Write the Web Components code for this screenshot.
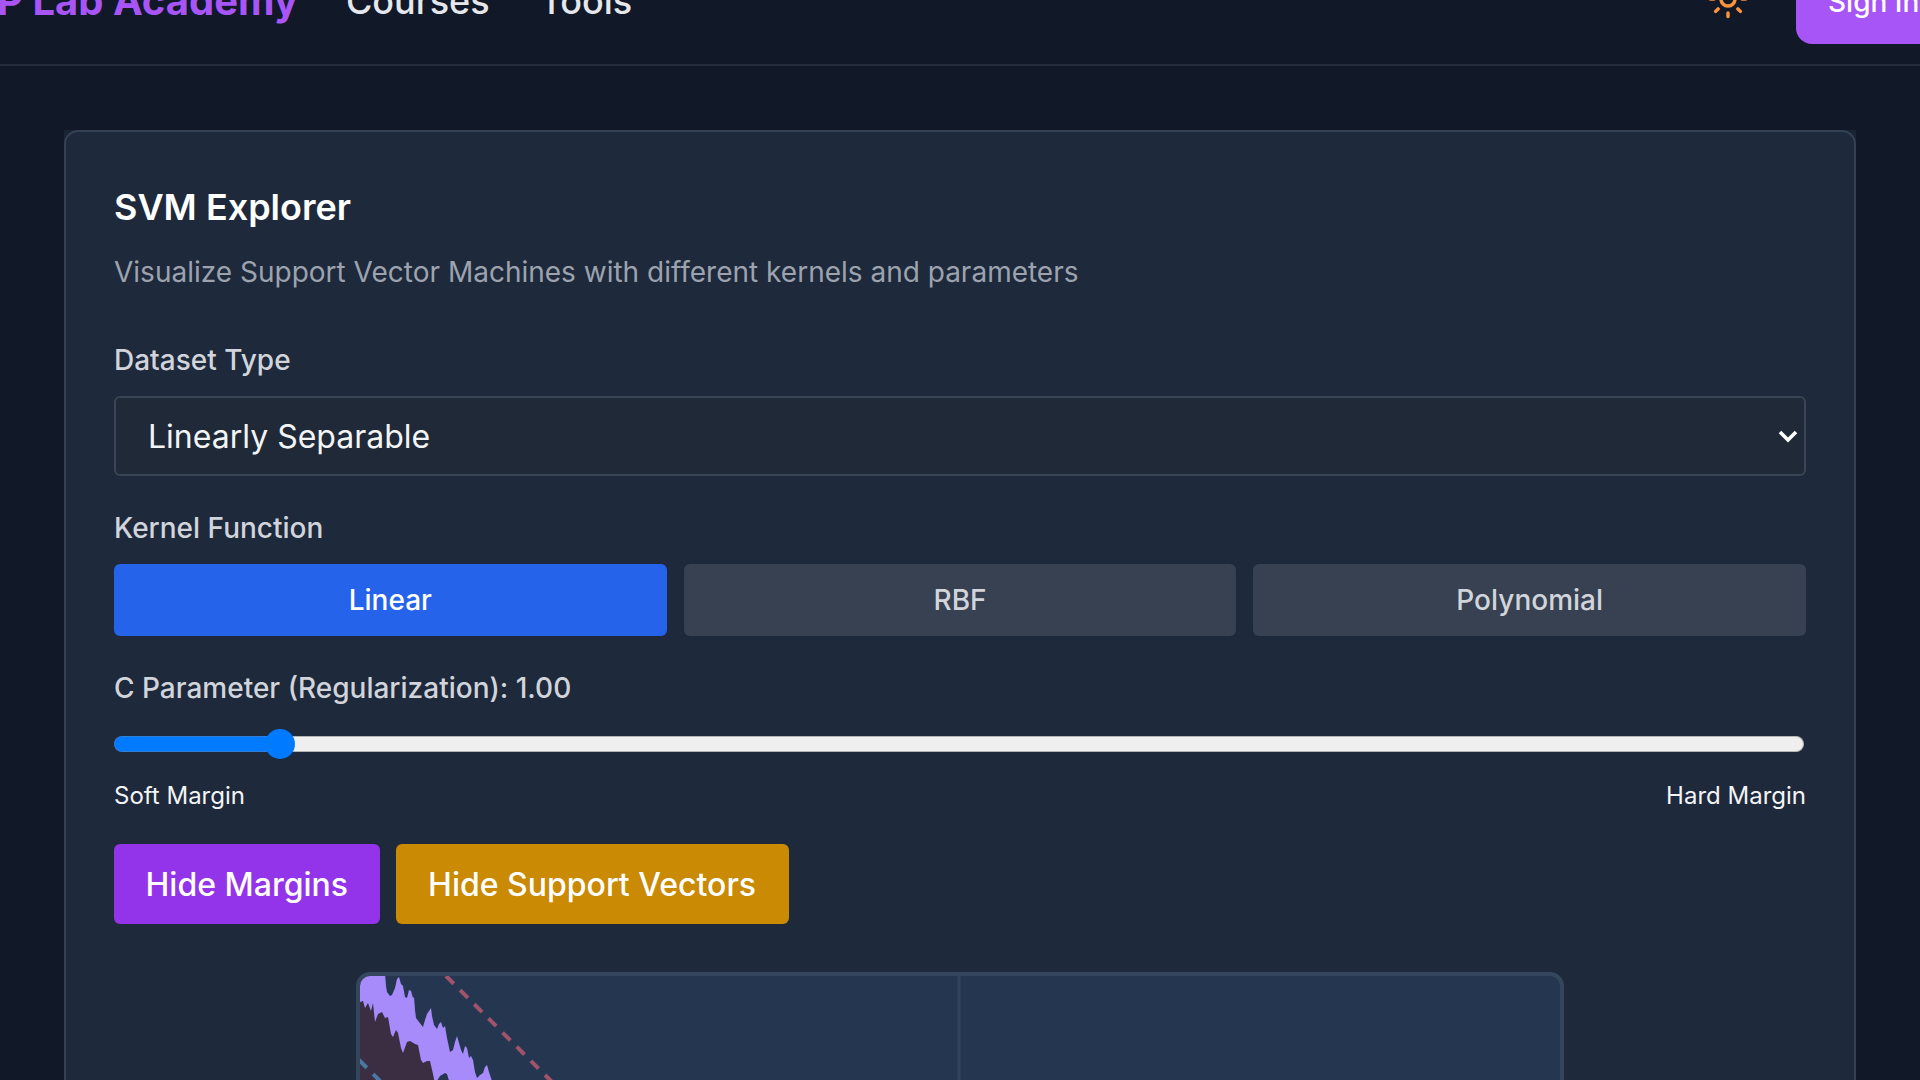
<!DOCTYPE html>
<html>
<head>
<meta charset="utf-8">
<title>SVM Explorer</title>
<style>
    html, body {
        margin: 0;
        height: 100%;
        overflow: hidden;
        background: #111827;
        color: #f3f4f6;
        font-family: Inter, "Liberation Sans", sans-serif;
    }
</style>
</head>
<body>
<lab-header></lab-header>
<svm-explorer>
    <span slot="title">SVM Explorer</span>
    <span slot="description">Visualize Support Vector Machines with different kernels and parameters</span>
</svm-explorer>

<script>
class LabHeader extends HTMLElement {
    constructor() {
        super()
        this.attachShadow({ mode: 'open' })
        this.shadowRoot.innerHTML = `
            <style>
                :host {
                    display: flex;
                    align-items: center;
                    height: 88px;
                    margin-top: -44px;
                    padding-bottom: 20px;
                    border-bottom: 2px solid #252d3c;
                    overflow: hidden;
                }
                .brand {
                    margin-left: -3px;
                    font-size: 40px;
                    font-weight: 700;
                    color: #a855f7;
                    white-space: nowrap;
                }
                nav {
                    display: flex;
                    gap: 50px;
                    margin-left: 48px;
                    padding-top: 1px;
                    font-size: 36px;
                    font-weight: 500;
                    color: #e5e7eb;
                }
                .right {
                    display: flex;
                    align-items: center;
                    margin-left: auto;
                    gap: 47px;
                }
                svg {
                    display: block;
                    width: 42px;
                    height: 42px;
                    margin-top: -2px;
                    fill: none;
                    stroke: #fb923c;
                    stroke-width: 2;
                    stroke-linecap: round;
                }
                button {
                    flex-shrink: 0;
                    height: 88px;
                    width: 170px;
                    margin-right: -46px;
                    padding: 3px 32px 0;
                    border: 0;
                    border-radius: 16px;
                    background: #a855f7;
                    color: #fff;
                    font: 500 28px Inter, sans-serif;
                    text-align: left;
                    white-space: nowrap;
                }
            </style>
            <div class="brand">P Lab Academy</div>
            <nav><span>Courses</span><span>Tools</span></nav>
            <div class="right">
                <svg viewBox="0 0 24 24">
                    <circle cx="12" cy="12" r="4"></circle>
                    <path d="M12 2v2M12 20v2M4.93 4.93l1.41 1.41M17.66 17.66l1.41 1.41M2 12h2M20 12h2M6.34 17.66l-1.41 1.41M19.07 4.93l-1.41 1.41"></path>
                </svg>
                <button>Sign In</button>
            </div>
        `
    }
}

class DatasetSelect extends HTMLElement {
    constructor() {
        super()
        this.attachShadow({ mode: 'open' })
        this.shadowRoot.innerHTML = `
            <style>
                :host {
                    display: flex;
                    flex-shrink: 0;
                    align-items: center;
                    justify-content: space-between;
                    box-sizing: border-box;
                    height: 80px;
                    padding: 1px 4px 0 32px;
                    border: 2px solid #3a4555;
                    border-radius: 6px;
                    background: #1f2937;
                    color: #f3f4f6;
                    font-size: 32px;
                }
                svg {
                    width: 24px;
                    height: 16px;
                    fill: none;
                    stroke: #fff;
                    stroke-width: 3.6;
                }
            </style>
            <slot></slot>
            <svg viewBox="0 0 24 16"><path d="M4 3l8 8 8-8"></path></svg>
        `
    }
}

class KernelButton extends HTMLElement {
    constructor() {
        super()
        this.attachShadow({ mode: 'open' })
        this.shadowRoot.innerHTML = `
            <style>
                :host {
                    display: flex;
                    flex: 1;
                    align-items: center;
                    justify-content: center;
                    height: 72px;
                    border-radius: 6px;
                    background: #374151;
                    color: #d1d5db;
                    font-size: 28px;
                    font-weight: 500;
                }
                :host(.active) {
                    background: #2563eb;
                    color: #fff;
                }
            </style>
            <slot></slot>
        `
    }
}

class RangeSlider extends HTMLElement {
    constructor() {
        super()
        this.attachShadow({ mode: 'open' })
        this.shadowRoot.innerHTML = `
            <style>
                :host {
                    display: flex;
                    align-items: center;
                    height: 30px;
                    padding-right: 2px;
                }
                .fill {
                    width: 166px;
                    margin-right: -15px;
                    box-sizing: border-box;
                    height: 16px;
                    border: 1px solid #2f7fd8;
                    border-right: 0;
                    border-radius: 8px 0 0 8px;
                    background: #007aff;
                }
                .thumb {
                    flex-shrink: 0;
                    width: 30px;
                    height: 30px;
                    border-radius: 50%;
                    background: #007aff;
                    position: relative;
                    z-index: 1;
                }
                .rest {
                    flex: 1;
                    margin-left: -15px;
                    box-sizing: border-box;
                    height: 16px;
                    border-radius: 0 8px 8px 0;
                    border: 1px solid #b4b4b4;
                    border-left: 0;
                    background: #efefef;
                }
            </style>
            <div class="fill"></div>
            <div class="thumb"></div>
            <div class="rest"></div>
        `
    }
}

class ActionButton extends HTMLElement {
    constructor() {
        super()
        this.attachShadow({ mode: 'open' })
        this.shadowRoot.innerHTML = `
            <style>
                :host {
                    display: flex;
                    align-items: center;
                    height: 80px;
                    padding: 0 var(--pad, 31.5px);
                    border-radius: 6px;
                    background: var(--btn, #9333ea);
                    color: #fff;
                    font-size: 32px;
                    font-weight: 500;
                }
            </style>
            <slot></slot>
        `
    }
}

class SvmCanvas extends HTMLElement {
    constructor() {
        super()
        this.attachShadow({ mode: 'open' })
        this.shadowRoot.innerHTML = `
            <style>
                :host {
                    display: block;
                    flex-shrink: 0;
                    box-sizing: border-box;
                    width: 1208px;
                    height: 800px;
                    margin: 0 auto;
                    border: 4px solid #34465c;
                    border-radius: 14px;
                    background: #243650;
                    overflow: hidden;
                }
                svg { display: block; width: 1200px; height: 792px; }
            </style>
            <svg viewBox="0 0 1200 792">
                <defs><filter id="soft"><feGaussianBlur stdDeviation="0.5"></feGaussianBlur></filter></defs>
                <path d="M599 0V792" stroke="#33445e" stroke-width="3"></path>
                <path filter="url(#soft)" fill="#3a2f42" d="M-3 27L3 25L5 32L8 27L11 35L13 27L15 46L18 38L22 36L25 42L28 41L31 58L33 61L36 54L38 57L41 72L43 77L47 66L50 65L55 68L58 69L61 84L63 87L67 85L70 85L73 98L75 108L-3 108Z"></path>
                <path filter="url(#soft)" fill="#a78bfa" d="M-3 -3H25L26 10L27 16L30 20L32 19L35 12L37 3L39 1L41 8L43 10L45 21L47 22L49 14L51 15L53 22L54 21L55 34L56 42L59 46L63 51L65 44L67 38L69 35L71 32L72 40L74 49L77 53L79 48L81 46L83 52L85 50L87 62L90 76L93 74L95 66L97 60L99 67L101 74L103 78L105 70L107 72L109 82L111 80L113 84L115 96L117 102L120 99L123 97L125 91L127 89L129 96L133 108H90L87 98L85 97L80 100L75 108L73 98L70 85L67 85L63 87L61 84L58 69L55 68L50 65L47 66L43 77L41 72L38 57L36 54L33 61L31 58L28 41L25 42L22 36L18 38L15 46L13 27L11 35L8 27L5 32L3 25L-3 27Z"></path>
                <path filter="url(#soft)" d="M86 0L192 106" stroke="#a0526b" stroke-width="4" stroke-dasharray="11 9" fill="none"></path>
                <path filter="url(#soft)" d="M-1 84L20 105" stroke="#4a79a3" stroke-width="4" stroke-dasharray="11 9" fill="none"></path>
            </svg>
        `
    }
}

class SvmExplorer extends HTMLElement {
    constructor() {
        super()
        this.attachShadow({ mode: 'open' })
        this.shadowRoot.innerHTML = `
            <style>
                :host {
                    display: block;
                    width: 1792px;
                    margin: 64px 64px 0;
                    background: #1a2433;
                    border-radius: 0;
                }
                .card {
                    display: flex;
                    flex-direction: column;
                    box-sizing: border-box;
                    padding: 48px 48px 48px;
                    border: 2px solid #334155;
                    border-radius: 14px;
                    background: #1e293b;
                }
                h2 {
                    margin: 0;
                    font-size: 36px;
                    line-height: 54px;
                    font-weight: 600;
                    color: #fff;
                }
                p {
                    margin: 20px 0 0;
                    font-size: 28px;
                    line-height: 36px;
                    color: #9ca3af;
                }
                label {
                    margin-bottom: 20px;
                    font-size: 28px;
                    line-height: 32px;
                    font-weight: 500;
                    color: #d1d5db;
                }
                .dataset { margin-top: 54px; }
                .kernel { margin-top: 36px; }
                .kernels { display: flex; gap: 17px; }
                .param { margin-top: 36px; margin-bottom: 25px; }
                .ends {
                    display: flex;
                    justify-content: space-between;
                    margin-top: 22px;
                    font-size: 24px;
                    line-height: 30px;
                    color: #f3f4f6;
                }
                .actions { display: flex; gap: 16px; margin-top: 33px; }
                svm-canvas { margin-top: 48px; }
            </style>
            <div class="card">
                <h2><slot name="title"></slot></h2>
                <p><slot name="description"></slot></p>
                <label class="dataset">Dataset Type</label>
                <dataset-select>Linearly Separable</dataset-select>
                <label class="kernel">Kernel Function</label>
                <div class="kernels">
                    <kernel-button class="active">Linear</kernel-button>
                    <kernel-button>RBF</kernel-button>
                    <kernel-button>Polynomial</kernel-button>
                </div>
                <label class="param">C Parameter (Regularization): 1.00</label>
                <range-slider></range-slider>
                <div class="ends"><span>Soft Margin</span><span>Hard Margin</span></div>
                <div class="actions">
                    <action-button>Hide Margins</action-button>
                    <action-button style="--btn: #ca8a04; --pad: 32.6px">Hide Support Vectors</action-button>
                </div>
                <svm-canvas></svm-canvas>
            </div>
        `
    }
}

customElements.define('lab-header', LabHeader)
customElements.define('dataset-select', DatasetSelect)
customElements.define('kernel-button', KernelButton)
customElements.define('range-slider', RangeSlider)
customElements.define('action-button', ActionButton)
customElements.define('svm-canvas', SvmCanvas)
customElements.define('svm-explorer', SvmExplorer)
</script>
</body>
</html>
